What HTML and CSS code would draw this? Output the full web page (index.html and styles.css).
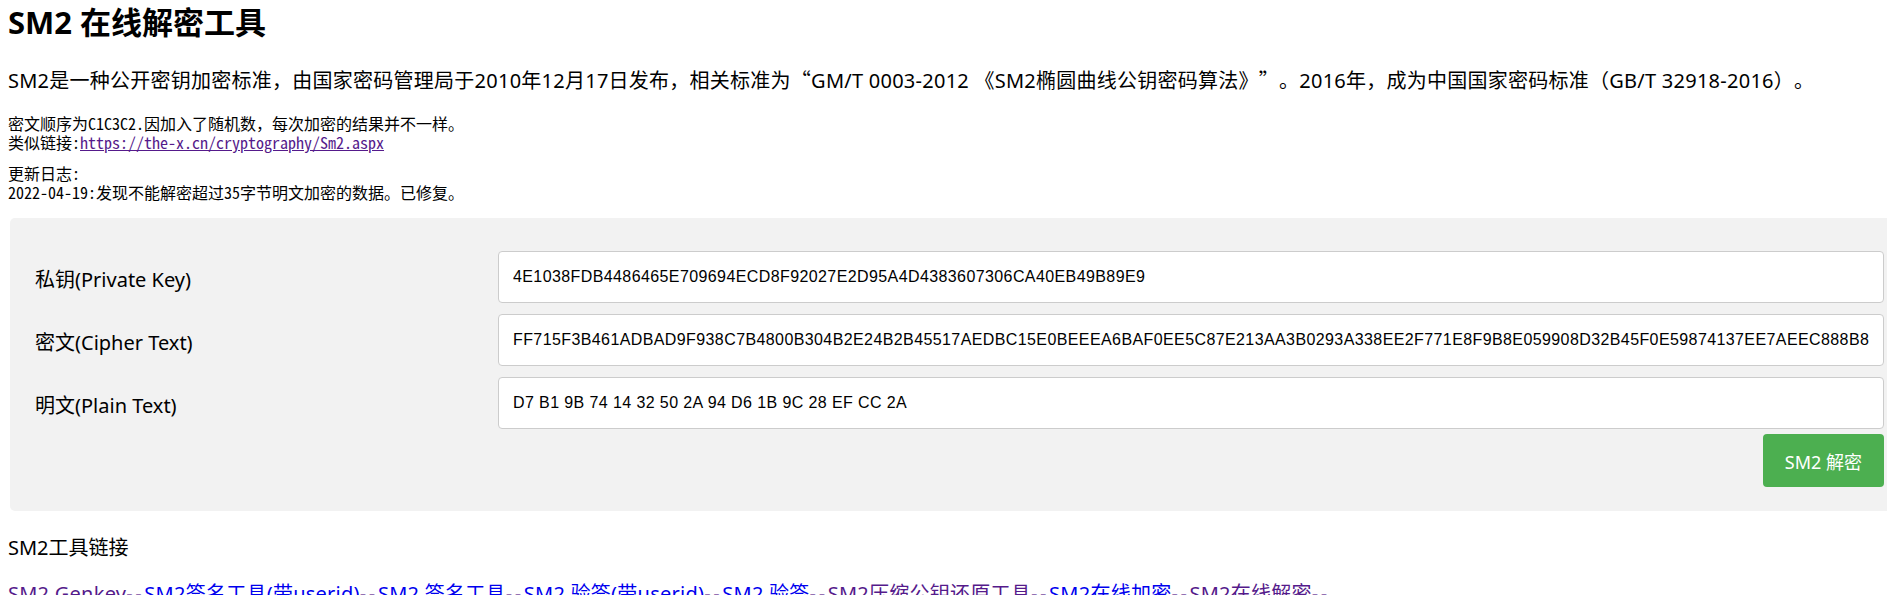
FILE: index.html
```html
<!DOCTYPE html>
<html lang="zh-CN">
<head>
<meta charset="utf-8">
<title>SM2 在线解密工具</title>
<link rel="stylesheet" href="styles.css">
</head>
<body>
<h1 class="title">SM2 在线解密工具</h1>
<p class="intro">SM2是一种公开密钥加密标准，由国家密码管理局于2010年12月17日发布，相关标准为<span class="cjk">“</span>GM/T 0003-2012 《SM2椭圆曲线公钥密码算法》<span class="cjk">”</span>。2016年，成为中国国家密码标准（GB/T 32918-2016）。</p>
<div class="notes">密文顺序为C1C3C2.因加入了随机数，每次加密的结果并不一样。<br>类似链接:<a class="visited" href="#">https://the-x.cn/cryptography/Sm2.aspx</a></div>
<div class="notes log">更新日志:<br>2022-04-19:发现不能解密超过35字节明文加密的数据。已修复。</div>

<form class="panel">
  <div class="row">
    <label class="label" for="pk">私钥(Private Key)</label>
    <input class="field" id="pk" type="text" value="4E1038FDB4486465E709694ECD8F92027E2D95A4D4383607306CA40EB49B89E9">
  </div>
  <div class="row">
    <label class="label" for="ct">密文(Cipher Text)</label>
    <input class="field" id="ct" type="text" value="FF715F3B461ADBAD9F938C7B4800B304B2E24B2B45517AEDBC15E0BEEEA6BAF0EE5C87E213AA3B0293A338EE2F771E8F9B8E059908D32B45F0E59874137EE7AEEC888B8">
  </div>
  <div class="row">
    <label class="label" for="pt">明文(Plain Text)</label>
    <input class="field" id="pt" type="text" value="D7 B1 9B 74 14 32 50 2A 94 D6 1B 9C 28 EF CC 2A">
  </div>
  <div class="actions">
    <button class="btn" type="button">SM2 解密</button>
  </div>
</form>

<p class="tools-title">SM2工具链接</p>
<p class="tools"><a class="visited" href="#">SM2 Genkey</a><span class="sep">--</span><a href="#">SM2签名工具(带userid)</a><span class="sep">--</span><a href="#">SM2 签名工具</a><span class="sep">--</span><a href="#">SM2 验签(带userid)</a><span class="sep">--</span><a href="#">SM2 验签</a><span class="sep">--</span><a class="visited" href="#">SM2压缩公钥还原工具</a><span class="sep">--</span><a href="#">SM2在线加密</a><span class="sep">--</span><a class="visited" href="#">SM2在线解密</a><span class="sep">--</span></p>
</body>
</html>
```

FILE: styles.css
```css
html, body {
  background: #fff;
}
body {
  margin: 0 8px;
  color: #000;
  font-family: "Noto Sans", "Noto Sans CJK SC", sans-serif;
  font-size: 20px;
  text-spacing-trim: space-all;
  text-autospace: no-autospace;
}
.title {
  margin: 2px 0 0 0;
  font-size: 31px;
  line-height: 40px;
  font-weight: 700;
}
.intro {
  margin: 24px 0 0 0;
  line-height: 28px;
  letter-spacing: 0.25px;
  white-space: nowrap;
}
.cjk {
  font-family: "Noto Sans CJK SC", sans-serif;
}
.notes {
  margin-top: 19px;
  font-family: "Noto Sans Mono CJK SC", "Liberation Mono", monospace;
  font-size: 16px;
  line-height: 19px;
}
.notes.log {
  margin-top: 12px;
}
a {
  color: #0000ee;
}
a.visited, .sep {
  color: #551a8b;
}
.sep {
  letter-spacing: 2.6px;
}
.panel {
  margin: 16px -8px 0 2px;
  padding: 33px 11px 24px 25px;
  background: #f2f2f2;
  border-radius: 5px;
}
.row {
  display: flex;
  align-items: center;
  margin-bottom: 11px;
}
.label {
  width: 463px;
  flex: none;
  padding-top: 6px;
  line-height: 28px;
}
.field {
  flex: 1;
  min-width: 0;
  height: 52px;
  box-sizing: border-box;
  margin: 0;
  padding: 0 14px;
  border: 1px solid #ccc;
  border-radius: 4px;
  background: #fff;
  color: #000;
  font-family: "Liberation Sans", Arial, sans-serif;
  font-size: 16px;
  letter-spacing: 0.4px;
  outline: none;
}
.actions {
  display: flex;
  justify-content: flex-end;
  margin-top: -6px;
}
.btn {
  height: 53px;
  padding: 0 22px;
  border: none;
  border-radius: 4px;
  background: #4caf50;
  color: #fff;
  font-family: "Noto Sans", "Noto Sans CJK SC", sans-serif;
  font-size: 18px;
}
.tools-title {
  margin: 23px 0 0 0;
  line-height: 28px;
}
.tools {
  margin: 18px 0 0 0;
  line-height: 28px;
  letter-spacing: 0.25px;
  white-space: nowrap;
}
```
